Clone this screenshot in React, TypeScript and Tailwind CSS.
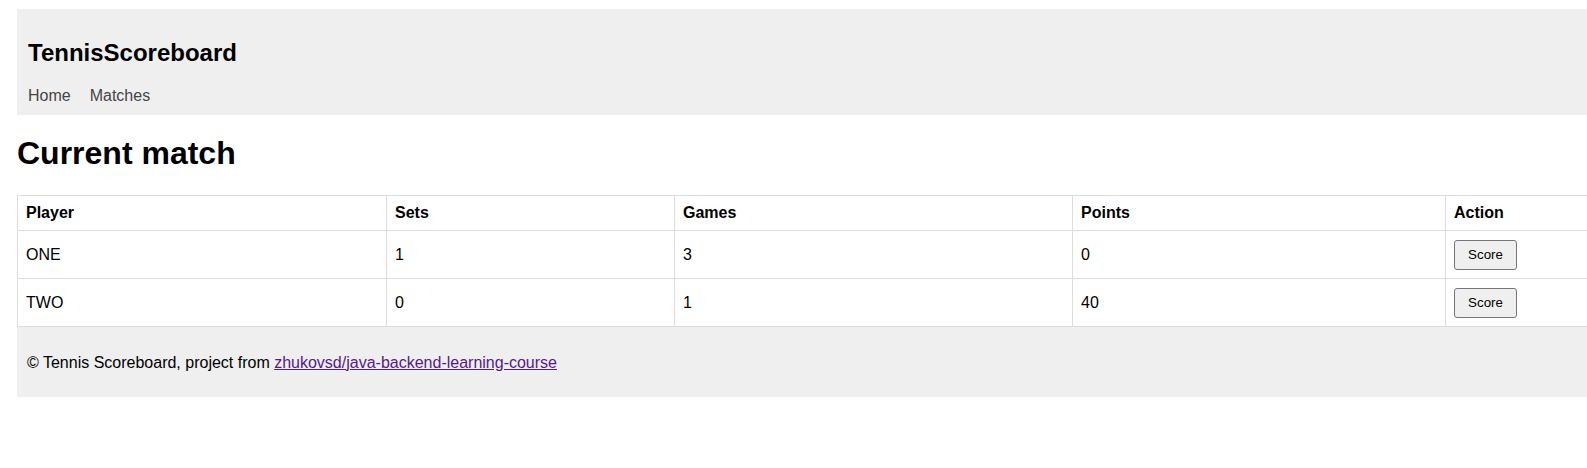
const rows = [
  { player: "ONE", sets: 1, games: 3, points: "0" },
  { player: "TWO", sets: 0, games: 1, points: "40" },
]

const head = "border border-[#dddddd] px-[8px] py-[8px] text-left align-middle"
const cell = "border border-[#dddddd] px-[8px] py-[8.5px] text-left align-middle"

export default function App() {
  return (
    <div className="w-[1587px] h-[468px] overflow-hidden bg-white font-['Liberation_Sans',Arial,sans-serif] text-[16px] text-black">
      <div className="ml-[17px] mt-[9px] w-[1660px]">
        <header className="bg-[#efefef] px-[11px] pt-[30px] pb-[10px]">
          <div className="text-[24px] leading-[28px] font-bold">TennisScoreboard</div>
          <nav className="mt-[20px] flex gap-[19px] leading-[18px] text-[#444444]">
            <a href="#">Home</a>
            <a href="#">Matches</a>
          </nav>
        </header>

        <h1 className="mt-[20px] mb-[23px] text-[32px] leading-[37px] font-bold">Current match</h1>

        <table className="w-full border-collapse leading-[18px]">
          <colgroup>
            <col className="w-[369px]" />
            <col className="w-[288px]" />
            <col className="w-[398px]" />
            <col className="w-[373px]" />
            <col />
          </colgroup>
          <thead>
            <tr>
              <th className={head}>Player</th>
              <th className={head}>Sets</th>
              <th className={head}>Games</th>
              <th className={head}>Points</th>
              <th className={head}>Action</th>
            </tr>
          </thead>
          <tbody>
            {rows.map((r) => (
              <tr key={r.player}>
                <td className={cell}>{r.player}</td>
                <td className={cell}>{r.sets}</td>
                <td className={cell}>{r.games}</td>
                <td className={cell}>{r.points}</td>
                <td className={cell}>
                  <button
                    type="button"
                    className="h-[30px] w-[63px] rounded-[3px] border border-[#767676] bg-[#efefef] text-[13.33px] leading-[15px] text-black">
                    Score
                  </button>
                </td>
              </tr>
            ))}
          </tbody>
        </table>

        <footer className="bg-[#efefef] px-[10px] pt-[25.5px] pb-[25px] leading-[19px]">
          © Tennis Scoreboard, project from{" "}
          <a href="#" className="text-[#551a8b] underline">
            zhukovsd/java-backend-learning-course
          </a>
        </footer>
      </div>
    </div>
  )
}
